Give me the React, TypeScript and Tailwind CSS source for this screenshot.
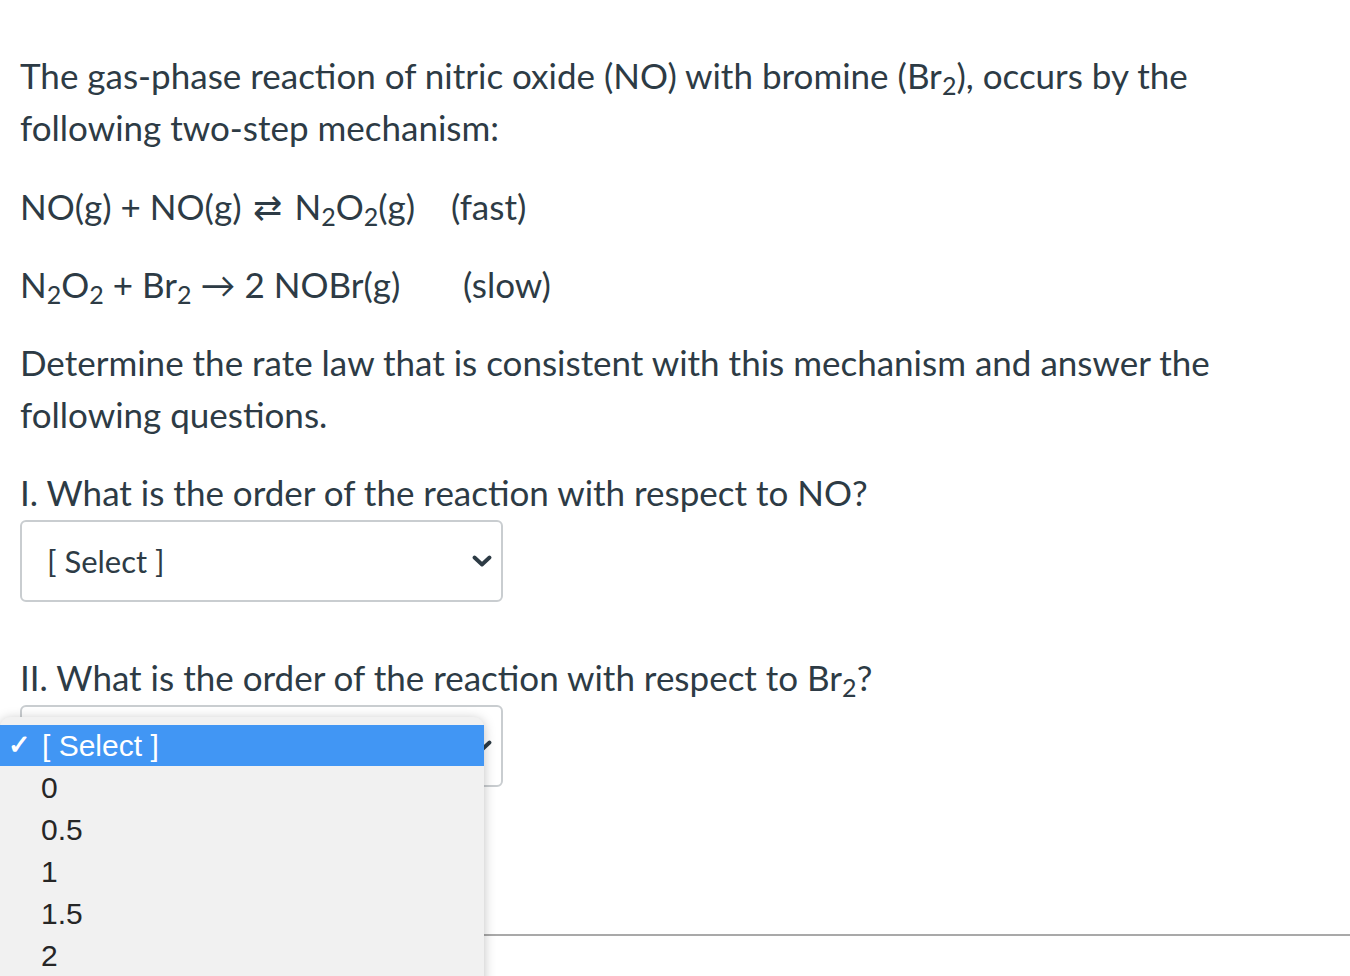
import React from "react";

function Chevron() {
  return (
    <svg width="20" height="14" viewBox="0 0 20 14" className="text-[#2d3b45]">
      <path d="M2.5 3.5 L10 10.5 L17.5 3.5" fill="none" stroke="currentColor" strokeWidth="3.8" strokeLinecap="round" strokeLinejoin="round" />
    </svg>
  );
}

function SelectBox() {
  return (
    <div className="mt-[2px] w-[483px] h-[82px] rounded-[6px] border-2 border-[#c9cdd0] bg-white flex items-center justify-between pl-[25px] pr-[9px]">
      <span className="text-[31px]">[ Select ]</span>
      <Chevron />
    </div>
  );
}

function Sub({ children }: { children: React.ReactNode }) {
  return <sub className="text-[25px]">{children}</sub>;
}

const options = ["0", "0.5", "1", "1.5", "2"];

export default function App() {
  return (
    <div
      className="relative min-h-[976px] bg-white overflow-hidden text-[#2d3b45] text-[35px]"
      style={{ fontFamily: "Lato, 'Noto Sans', sans-serif" }}
    >
      <div className="pl-[20px] pt-[49px]">
        <p className="leading-[52px] mb-[27px] max-w-[1250px]">
          The gas-phase reaction of nitric oxide (NO) with bromine (Br<Sub>2</Sub>), occurs by the following two-step
          mechanism:
        </p>
        <p className="leading-[52px] mb-[26px]">
          NO(g) + NO(g) <span className="text-[35px] mx-[3px]">⇄</span> N<Sub>2</Sub>O<Sub>2</Sub>(g)&nbsp;&nbsp;&nbsp;&nbsp;(fast)
        </p>
        <p className="leading-[52px] mb-[26px]">
          N<Sub>2</Sub>O<Sub>2</Sub> + Br<Sub>2</Sub> → 2 NOBr(g)&nbsp;&nbsp;&nbsp;&nbsp;&nbsp;&nbsp;&nbsp;(slow)
        </p>
        <p className="leading-[52px] mb-[26px] max-w-[1250px]">
          Determine the rate law that is consistent with this mechanism and answer the following questions.
        </p>
        <p className="leading-[52px]">I. What is the order of the reaction with respect to NO?</p>
        <SelectBox />
        <p className="leading-[52px] mt-[49px]">
          II. What is the order of the reaction with respect to Br<Sub>2</Sub>?
        </p>
        <SelectBox />
        <div className="mt-[147px] h-[2px] bg-[#a9a9a9]" />
      </div>

      {/* open native dropdown */}
      <div
        className="absolute left-0 top-[717px] w-[484px] h-[280px] bg-[#f1f1f1] rounded-t-[10px] pt-[8px] shadow-[0_2px_12px_rgba(0,0,0,0.25)] text-[30px] text-[#262626]"
        style={{ fontFamily: "'Liberation Sans', Arial, sans-serif" }}
      >
        <div className="h-[41px] bg-[#4196f4] text-white flex items-center pl-[8px]">
          <span className="w-[34px] text-[27px] font-bold">✓</span>
          <span>[ Select ]</span>
        </div>
        {options.map((o) => (
          <div key={o} className="h-[42px] flex items-center pl-[41px]">
            {o}
          </div>
        ))}
      </div>
    </div>
  );
}
